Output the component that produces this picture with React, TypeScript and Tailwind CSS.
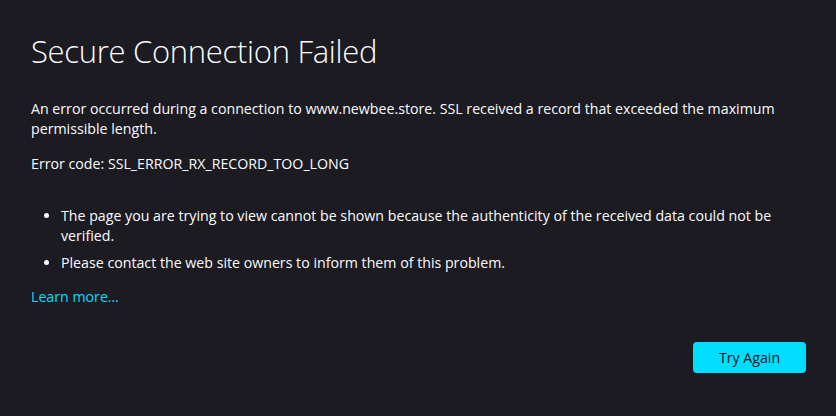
import React from 'react';

export default function App() {
    return (
        <div className="w-[836px] h-[416px] bg-[#1c1b22] text-[#fbfbfe] overflow-hidden" style={{ fontFamily: '"Open Sans", "Noto Sans", sans-serif' }}>
            <div className="w-[806px] pl-[31px] pt-[27px]">
                <h1 className="text-[31px] font-light leading-[48px] tracking-[-0.3px] mb-[24px]">Secure Connection Failed</h1>
                <p className="text-[14.2px] leading-[20px]">
                    An error occurred during a connection to www.newbee.store. SSL received a record that exceeded the maximum permissible length.
                </p>
                <p className="text-[14.2px] leading-[20px] mt-[15px]">Error code: SSL_ERROR_RX_RECORD_TOO_LONG</p>
                <ul className="list-disc pl-[30px] mt-[32px] text-[14.2px] leading-[20px]">
                    <li>The page you are trying to view cannot be shown because the authenticity of the received data could not be verified.</li>
                    <li className="mt-[7px]">Please contact the web site owners to inform them of this problem.</li>
                </ul>
                <a href="#" className="block mt-[14px] text-[14.2px] leading-[20px] text-[#00ddff]">Learn more…</a>
                <div className="flex justify-end mt-[35px]">
                    <button className="w-[113px] h-[31px] rounded-[4px] bg-[#00ddff] text-[#15141a] text-[14.2px]">Try Again</button>
                </div>
            </div>
        </div>
    );
}
